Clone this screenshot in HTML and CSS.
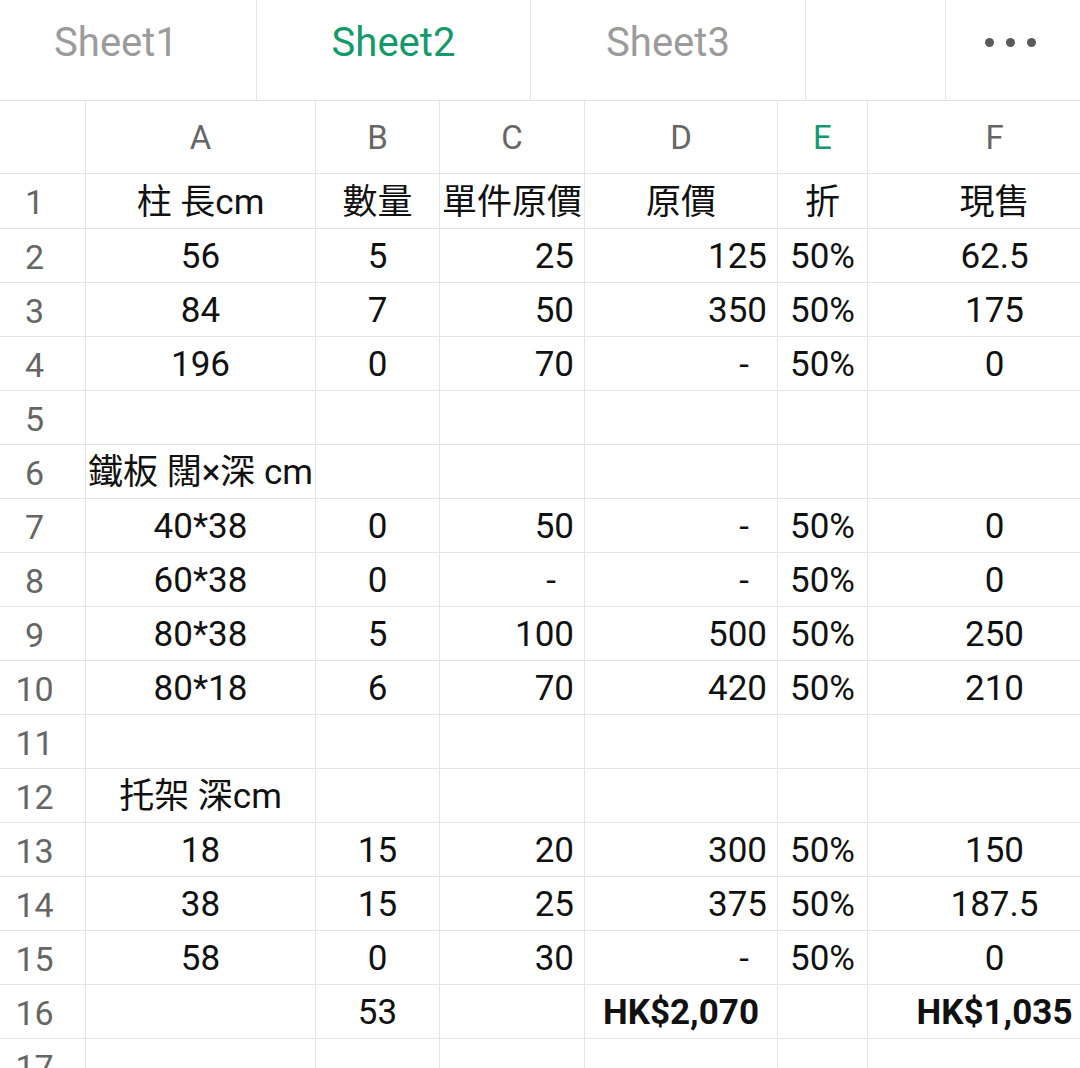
FILE: index.html
```html
<!DOCTYPE html>
<html lang="zh-Hant">
<head>
<meta charset="utf-8">
<title>Sheet2</title>
<link rel="stylesheet" href="styles.css">
</head>
<body>
<div class="app">
  <div class="tabs">
    <div class="tab t1">Sheet1</div>
    <div class="tab t2 active">Sheet2</div>
    <div class="tab t3">Sheet3</div>
    <div class="tab t4"></div>
    <div class="tab t5 more"><span class="dot"></span><span class="dot"></span><span class="dot"></span></div>
  </div>
  <div class="sheet">
    <div class="cell corner hdr"></div>
    <div class="cell colh">A</div>
    <div class="cell colh">B</div>
    <div class="cell colh">C</div>
    <div class="cell colh">D</div>
    <div class="cell colh sel">E</div>
    <div class="cell colh">F</div>

    <div class="cell rowh first">1</div>
    <div class="cell c first">柱 長cm</div>
    <div class="cell c first">數量</div>
    <div class="cell c first">單件原價</div>
    <div class="cell c first">原價</div>
    <div class="cell c first">折</div>
    <div class="cell c first">現售</div>

    <div class="cell rowh">2</div>
    <div class="cell c">56</div>
    <div class="cell c">5</div>
    <div class="cell r">25</div>
    <div class="cell r">125</div>
    <div class="cell c">50%</div>
    <div class="cell c">62.5</div>

    <div class="cell rowh">3</div>
    <div class="cell c">84</div>
    <div class="cell c">7</div>
    <div class="cell r">50</div>
    <div class="cell r">350</div>
    <div class="cell c">50%</div>
    <div class="cell c">175</div>

    <div class="cell rowh">4</div>
    <div class="cell c">196</div>
    <div class="cell c">0</div>
    <div class="cell r">70</div>
    <div class="cell d">-</div>
    <div class="cell c">50%</div>
    <div class="cell c">0</div>

    <div class="cell rowh">5</div>
    <div class="cell"></div>
    <div class="cell"></div>
    <div class="cell"></div>
    <div class="cell"></div>
    <div class="cell"></div>
    <div class="cell"></div>

    <div class="cell rowh">6</div>
    <div class="cell c spill">鐵板 闊×深 cm</div>
    <div class="cell"></div>
    <div class="cell"></div>
    <div class="cell"></div>
    <div class="cell"></div>
    <div class="cell"></div>

    <div class="cell rowh">7</div>
    <div class="cell c">40*38</div>
    <div class="cell c">0</div>
    <div class="cell r">50</div>
    <div class="cell d">-</div>
    <div class="cell c">50%</div>
    <div class="cell c">0</div>

    <div class="cell rowh">8</div>
    <div class="cell c">60*38</div>
    <div class="cell c">0</div>
    <div class="cell d">-</div>
    <div class="cell d">-</div>
    <div class="cell c">50%</div>
    <div class="cell c">0</div>

    <div class="cell rowh">9</div>
    <div class="cell c">80*38</div>
    <div class="cell c">5</div>
    <div class="cell r">100</div>
    <div class="cell r">500</div>
    <div class="cell c">50%</div>
    <div class="cell c">250</div>

    <div class="cell rowh">10</div>
    <div class="cell c">80*18</div>
    <div class="cell c">6</div>
    <div class="cell r">70</div>
    <div class="cell r">420</div>
    <div class="cell c">50%</div>
    <div class="cell c">210</div>

    <div class="cell rowh">11</div>
    <div class="cell"></div>
    <div class="cell"></div>
    <div class="cell"></div>
    <div class="cell"></div>
    <div class="cell"></div>
    <div class="cell"></div>

    <div class="cell rowh">12</div>
    <div class="cell c spill">托架 深cm</div>
    <div class="cell"></div>
    <div class="cell"></div>
    <div class="cell"></div>
    <div class="cell"></div>
    <div class="cell"></div>

    <div class="cell rowh">13</div>
    <div class="cell c">18</div>
    <div class="cell c">15</div>
    <div class="cell r">20</div>
    <div class="cell r">300</div>
    <div class="cell c">50%</div>
    <div class="cell c">150</div>

    <div class="cell rowh">14</div>
    <div class="cell c">38</div>
    <div class="cell c">15</div>
    <div class="cell r">25</div>
    <div class="cell r">375</div>
    <div class="cell c">50%</div>
    <div class="cell c">187.5</div>

    <div class="cell rowh">15</div>
    <div class="cell c">58</div>
    <div class="cell c">0</div>
    <div class="cell r">30</div>
    <div class="cell d">-</div>
    <div class="cell c">50%</div>
    <div class="cell c">0</div>

    <div class="cell rowh">16</div>
    <div class="cell"></div>
    <div class="cell c">53</div>
    <div class="cell"></div>
    <div class="cell c b">HK$2,070</div>
    <div class="cell"></div>
    <div class="cell c b">HK$1,035</div>

    <div class="cell rowh">17</div>
    <div class="cell"></div>
    <div class="cell"></div>
    <div class="cell"></div>
    <div class="cell"></div>
    <div class="cell"></div>
    <div class="cell"></div>
  </div>
</div>
</body>
</html>
```

FILE: styles.css
```css
html, body {
  margin: 0;
  padding: 0;
  background: #fff;
}
body {
  width: 1080px;
  height: 1068px;
  overflow: hidden;
  font-family: Roboto, "Noto Sans CJK TC", "Noto Sans", sans-serif;
}
.app {
  width: 1080px;
  height: 1068px;
  overflow: hidden;
}
.tabs {
  display: flex;
  height: 100px;
  border-bottom: 1px solid #e2e2e2;
}
.tab {
  box-sizing: border-box;
  height: 100px;
  display: flex;
  align-items: center;
  justify-content: center;
  padding-bottom: 16px;
  font-size: 40px;
  color: #9b9b9b;
  border-right: 1px solid #e6e6e6;
}
.t1 { width: 257px; padding-right: 24px; }
.t2 { width: 274px; }
.t3 { width: 275px; }
.t4 { width: 140px; }
.t5 { width: 134px; border-right: none; gap: 12px; padding-right: 6px; }
.tab.active { color: #14996c; }
.dot {
  width: 9px;
  height: 9px;
  border-radius: 50%;
  background: #5a5a5a;
}
.sheet {
  display: grid;
  grid-template-columns: 86px 230px 124px 145px 193px 90px 254px;
  grid-auto-rows: 54px;
  grid-template-rows: 73px 55px;
  width: 1122px;
}
.cell {
  box-sizing: border-box;
  border-right: 1px solid #e4e4e4;
  border-bottom: 1px solid #e4e4e4;
  display: flex;
  align-items: center;
  font-size: 35px;
  line-height: 1;
  color: #111;
  white-space: nowrap;
  min-width: 0;
  padding-top: 2px;
}
.colh {
  justify-content: center;
  font-size: 33px;
  color: #666;
  padding-top: 0;
}
.colh.sel { color: #14996c; }
.rowh {
  justify-content: center;
  padding-right: 16px;
  color: #666;
  font-size: 34px;
  background: #fff;
  position: relative;
  z-index: 1;
}
.c { justify-content: center; }
.r { justify-content: flex-end; padding-right: 10px; }
.d { justify-content: flex-end; padding-right: 28px; }
.b { font-weight: 700; }
.spill { overflow: visible; }
```
